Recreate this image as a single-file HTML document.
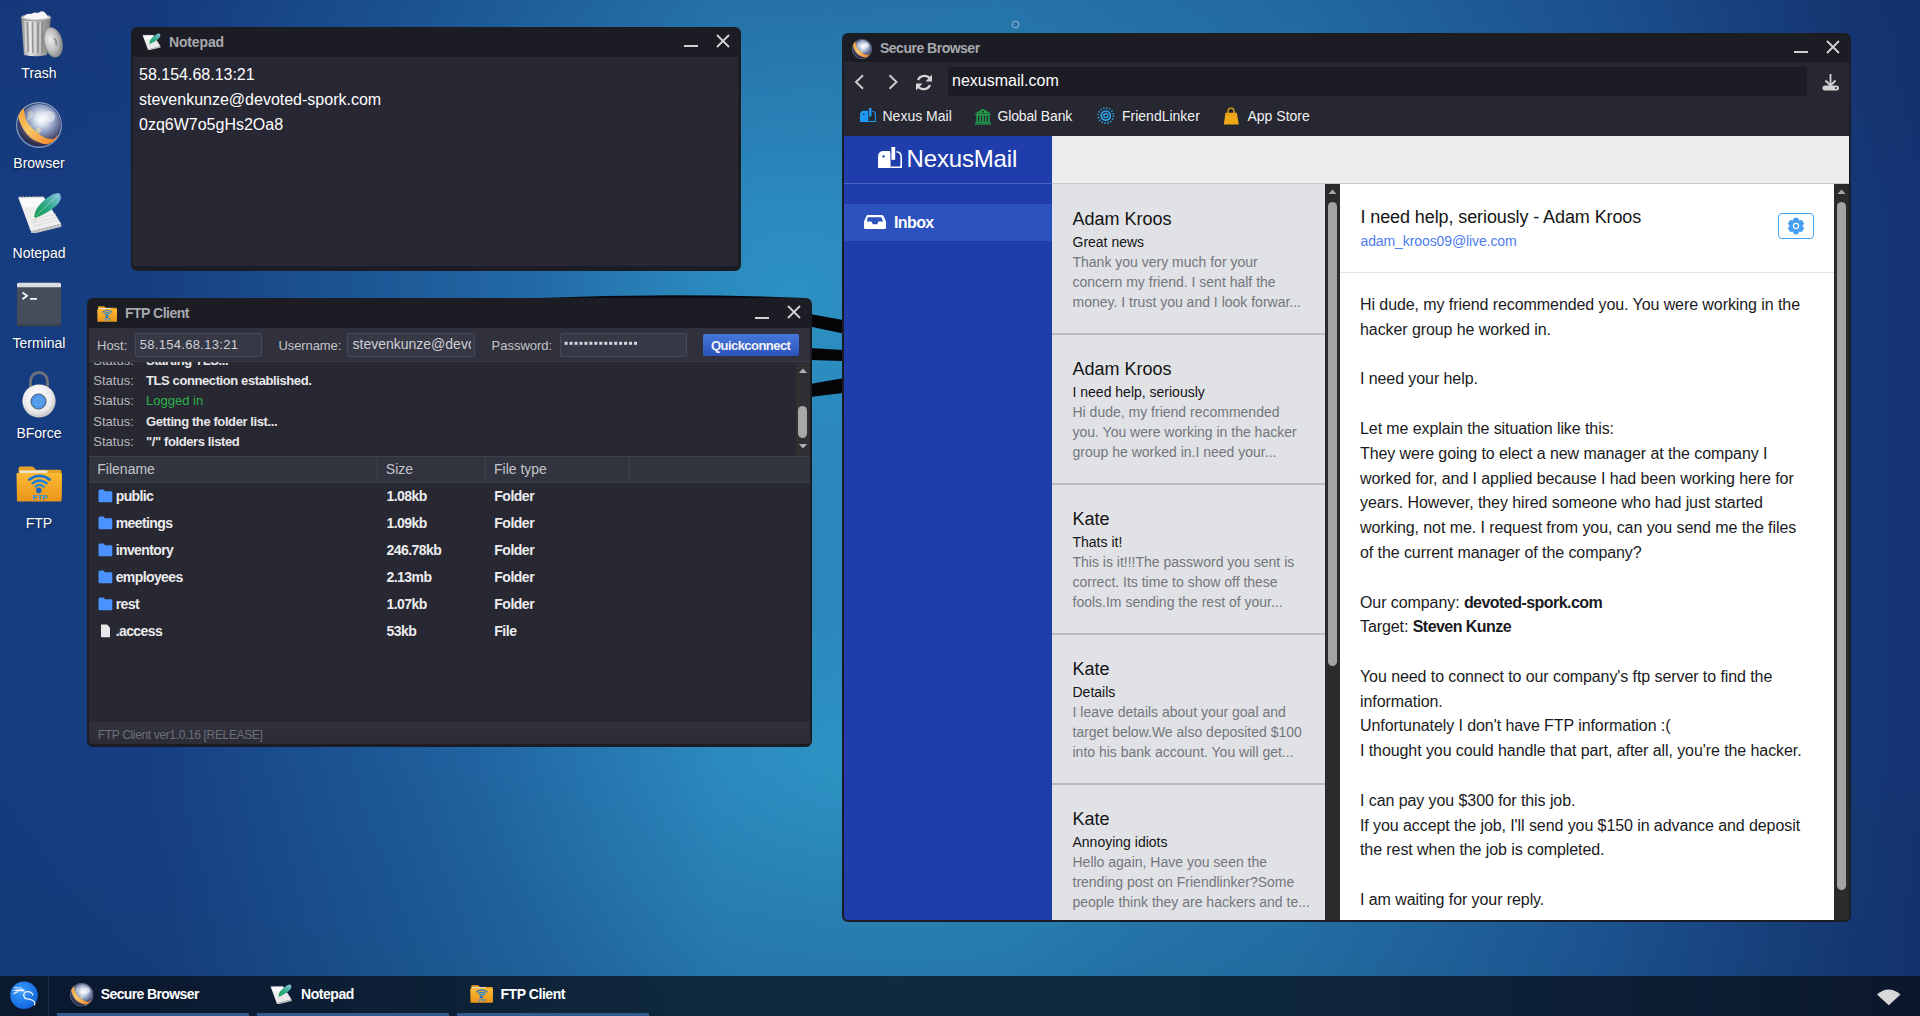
<!DOCTYPE html>
<html><head><meta charset="utf-8">
<style>
*{box-sizing:border-box;margin:0;padding:0}
html,body{width:1920px;height:1016px;overflow:hidden}
body{position:relative;font-family:"Liberation Sans",sans-serif;background:#163c80}
.t{position:absolute;line-height:1;white-space:pre}
.t b{letter-spacing:-0.55px}
.r{position:absolute}
svg{position:absolute;overflow:visible}
</style></head><body>
<svg width="0" height="0" style="position:absolute;left:0;top:0">
<defs>
 <radialGradient id="gGlobe" cx="0.55" cy="0.36" r="0.66">
  <stop offset="0" stop-color="#ffffff"/>
  <stop offset="0.22" stop-color="#dce4f0"/>
  <stop offset="0.5" stop-color="#8b9bc0"/>
  <stop offset="0.8" stop-color="#4a4a70"/>
  <stop offset="1" stop-color="#2a1c30"/>
 </radialGradient>
 <linearGradient id="gBand" x1="0" y1="0" x2="1" y2="1">
  <stop offset="0" stop-color="#f09a30"/>
  <stop offset="0.45" stop-color="#f8c868"/>
  <stop offset="1" stop-color="#f07c20"/>
 </linearGradient>
 <linearGradient id="gFeather" x1="0" y1="1" x2="1" y2="0">
  <stop offset="0" stop-color="#0f9a48"/>
  <stop offset="0.45" stop-color="#2aa882"/>
  <stop offset="1" stop-color="#8cc4e8"/>
 </linearGradient>
 <linearGradient id="gFolder" x1="0" y1="0" x2="0" y2="1">
  <stop offset="0" stop-color="#fdbb34"/>
  <stop offset="1" stop-color="#e8941a"/>
 </linearGradient>
 <linearGradient id="gSilver" x1="0" y1="0" x2="1" y2="0">
  <stop offset="0" stop-color="#8a8a8a"/>
  <stop offset="0.3" stop-color="#e6e6e6"/>
  <stop offset="0.55" stop-color="#bcbcbc"/>
  <stop offset="1" stop-color="#7c7c7c"/>
 </linearGradient>
 <radialGradient id="gLid" cx="0.35" cy="0.4" r="0.7">
  <stop offset="0" stop-color="#f0f0f0"/>
  <stop offset="0.6" stop-color="#b8b8b8"/>
  <stop offset="1" stop-color="#7a7a7a"/>
 </radialGradient>
 <radialGradient id="gLock" cx="0.45" cy="0.4" r="0.6">
  <stop offset="0" stop-color="#ffffff"/>
  <stop offset="0.7" stop-color="#ececec"/>
  <stop offset="1" stop-color="#c4c4c4"/>
 </radialGradient>
 <radialGradient id="gKali" cx="0.4" cy="0.35" r="0.7">
  <stop offset="0" stop-color="#3aa0ff"/>
  <stop offset="1" stop-color="#1060d8"/>
 </radialGradient>
 <linearGradient id="gQC" x1="0" y1="0" x2="0" y2="1">
  <stop offset="0" stop-color="#4a7ee0"/>
  <stop offset="1" stop-color="#2a52b8"/>
 </linearGradient>

 <symbol id="sGlobe" viewBox="0 0 46 46">
  <circle cx="23" cy="23" r="22.4" fill="#3a4a78" fill-opacity="0.5" stroke="#b4c4dc" stroke-opacity="0.75" stroke-width="1.1"/>
  <circle cx="23.5" cy="22.8" r="20.8" fill="url(#gGlobe)"/>
  <ellipse cx="33" cy="14.5" rx="6.2" ry="5.4" fill="#f4f4f4" opacity="0.55"/>
  <path d="M12,10 C15,8 18,9 17,13 C16,17 13,19 11,18 Z" fill="#f0ecd0" opacity="0.4"/>
  <ellipse cx="22.5" cy="28.5" rx="2.4" ry="2.8" fill="#f0e8b0" opacity="0.55"/>
  <path d="M10.3,4.2 C6,7 3,11 2.4,14.2 C2.5,17 3.2,19 4.4,21.1 C5.5,24 6.8,26.5 8.3,28.5 C10,31 12,33.5 14.2,35.4 C16.5,37.3 19,38.8 21.6,39.8 C24,41 27,42 29.5,42.3 C31.5,42.5 33.5,41.8 35.4,40.8 C38,39.3 40.3,36.5 41.8,33.4 L41.3,32.9 C40,34.8 38.8,36.2 37.4,36.9 C34.8,37.2 32,36.8 29.5,35.9 C26.5,34.5 23.5,32.5 21.1,30.5 C18.5,28.5 16,26.3 14.2,24.1 C12,21.5 10.5,19 9.8,16.7 C8.8,13.5 8.2,10 7.8,7.35 C8.5,6 9.3,5 10.3,4.2 Z" fill="url(#gBand)"/>
 </symbol>

 <symbol id="sNote" viewBox="0 0 45 41">
  <polygon points="13.9,39.5 44.1,31.8 44.4,34.8 14.2,42.3" fill="#c4c4c4"/>
  <polygon points="1.1,5.2 26.7,4.7 44.1,31.8 13.9,39.5" fill="#eeeeee"/>
  <polygon points="2.5,6.5 25.5,6 31,14 7,15.5" fill="#fafafa"/>
  <path d="M2.5,4.6 h23" stroke="#8a8a8a" stroke-width="1.4" stroke-dasharray="1.5 1.6"/>
  <path d="M17,34 L42,28 M15.5,31 L40.5,25 M14,28 L39,22" stroke="#d6d6d6" stroke-width="0.7"/>
  <path d="M17.5,30.5 L21,22" stroke="#b8c8c0" stroke-width="0.8"/>
  <path d="M17.5,25.5 C17,19 22,12 30,6 C34,3 38,0.8 42,1.3 C45.2,4 44,9 40,13 C36,17 30,20.5 24,23.5 C21,25 19,25.5 17.5,25.5 Z" fill="url(#gFeather)"/>
  <path d="M19,24 C25,18 33,10 41,3.5" stroke="#cfe8e0" stroke-width="0.6" fill="none" opacity="0.8"/>
 </symbol>

 <symbol id="sFolder" viewBox="0 0 47 36">
  <path d="M2.5,2.5 Q2.5,0.5 4.5,0.5 H16 Q17.5,0.5 18.5,2 L19.8,3.8 H44 Q45.5,3.8 45.5,5.5 V33 H2.5 Z" fill="#e4a322"/>
  <rect x="3.5" y="4.5" width="28" height="2.4" fill="#e8e8e0"/>
  <path d="M0.5,8 Q0.5,7 1.5,7 H44.5 Q46,7 46,8.5 L45.5,34.5 Q45.5,35.5 44.5,35.5 H2 Q1,35.5 1,34.5 Z" fill="url(#gFolder)"/>
  <path d="M13.2,13.6 Q23.5,6.2 33.8,13.6" stroke="#1a74d0" stroke-width="2.6" fill="none" stroke-linecap="round"/>
  <path d="M16.6,17.2 Q23.6,12.1 30.6,17.2" stroke="#1c80d8" stroke-width="2.5" fill="none" stroke-linecap="round"/>
  <path d="M19.6,20.6 Q23.6,17.1 27.6,20.6" stroke="#1e88e0" stroke-width="2.3" fill="none" stroke-linecap="round"/>
  <circle cx="22.8" cy="24.4" r="2.8" fill="#1766c8"/>
  <text x="24" y="33.6" font-family="Liberation Sans" font-weight="700" font-size="8" fill="#2a90dc" text-anchor="middle">FTP</text>
 </symbol>

 <symbol id="sMailbox" viewBox="0 0 24 21">
  <path d="M0,21 V9.8 Q0,4 5.8,4 H12.6 V21 Z" fill="currentColor"/>
  <path d="M12.6,20.2 H23.2 V10.2 Q23.2,4.8 18,4.8" stroke="currentColor" stroke-width="1.6" fill="none"/>
  <path d="M11.6,3 L18.4,3 L18.4,7.6 L17.8,13.8 L12.6,13.8 L12.6,7 Z" fill="var(--bg)"/>
  <rect x="13.4" y="0" width="3.8" height="12.8" fill="currentColor"/>
  <circle cx="5.6" cy="9.4" r="1.2" fill="var(--bg)"/>
 </symbol>
</defs></svg>

<div class="r" style="left:0;top:0;width:1920px;height:1016px;background:linear-gradient(90deg,#163c80 0px,#173e82 150px,#1d5a98 400px,#2a80b8 720px,#2a83b9 1000px,#2676ae 1300px,#1e5898 1600px,#163876 1850px,#143372 1920px)"></div>
<div class="r" style="left:0;top:0;width:1920px;height:1016px;background:radial-gradient(ellipse 380px 300px at 850px 760px,rgba(48,180,215,0.36) 0%,rgba(48,170,210,0.14) 50%,rgba(48,170,210,0) 100%),radial-gradient(ellipse 260px 300px at 790px 300px,rgba(48,180,215,0.32) 0%,rgba(48,175,210,0.12) 55%,rgba(48,170,210,0) 100%),linear-gradient(180deg,rgba(12,36,86,0.16) 0px,rgba(12,36,86,0) 220px,rgba(10,48,80,0) 760px,rgba(10,48,80,0.16) 976px)"></div>
<svg style="left:0;top:0" width="1920" height="1016"><path d="M540,299.5 Q670,294 805,299.5" stroke="#0a0b10" stroke-width="3" fill="none"/><polygon points="810,314 843,320 843,333.5 810,326.5" fill="#050508"/><polygon points="810,348 843,350 843,361 810,360" fill="#050508"/><polygon points="810,384 843,378.3 843,393 810,397" fill="#050508"/><circle cx="1015.5" cy="24.5" r="3.2" stroke="#8fb4d0" stroke-width="1.2" fill="none" opacity="0.8"/></svg>
<svg style="left:0;top:0" width="80" height="60"><path d="M21.2,17.5 L50.8,17.5 L47,55 Q35.5,57.5 24,55 Z" fill="url(#gSilver)"/><path d="M27.5,22 L28.3,52 M32.4,22 L32.8,53 M38,22 L38,53 M42.5,22 L42,53" stroke="#7e7e7e" stroke-width="1.5" opacity="0.75"/><path d="M25,21 L26,52 M30,21 L30.5,53 M35.2,21 L35.3,53 M40.2,21 L40,53" stroke="#f4f4f4" stroke-width="1" opacity="0.6"/><ellipse cx="36" cy="17.5" rx="14.8" ry="3.4" fill="#cfcfcf" stroke="#8c8c8c" stroke-width="0.9"/><path d="M24,17.5 Q26,13 31,14 Q34,11.5 38,13 Q41,10.5 44,11.8 Q47,14 48,17.5 Q36,21 24,17.5Z" fill="#f6f6f6"/><ellipse cx="52.8" cy="42.4" rx="9.4" ry="15.3" transform="rotate(-14 52.8 42.4)" fill="#8a8a8a"/><ellipse cx="53.6" cy="42.2" rx="8.8" ry="14.8" transform="rotate(-14 53.6 42.2)" fill="url(#gLid)"/><path d="M54,38.5 Q57,40 56,45" stroke="#7a7a7a" stroke-width="1.6" fill="none" opacity="0.8"/></svg>
<svg style="left:16px;top:102px" width="46" height="46"><use href="#sGlobe"/></svg>
<svg style="left:17px;top:192px" width="45" height="41"><use href="#sNote"/></svg>
<svg style="left:0;top:270px" width="80" height="60"><rect x="17" y="12.8" width="44" height="43.4" rx="1.5" fill="#454d5a"/><path d="M17,17.3 V14.3 Q17,12.8 18.5,12.8 H59.5 Q61,12.8 61,14.3 V17.3 Z" fill="#dcdde2"/><rect x="17" y="54" width="44" height="2.2" fill="#3a414c"/><path d="M22.5,22.5 L27,25.8 L22.5,29.2" stroke="#f4f4f4" stroke-width="1.8" fill="none"/><rect x="30" y="28" width="7" height="1.8" fill="#f0f0f0"/></svg>
<svg style="left:0;top:360px" width="80" height="60"><path d="M30.5,27 V21 A8.5,8.5 0 0 1 47.5,21 V27" stroke="#6e7278" stroke-width="2.8" fill="none"/><circle cx="39" cy="41" r="16.6" fill="url(#gLock)"/><circle cx="38.5" cy="41.5" r="7.6" fill="#4e96e8" stroke="#4c5a70" stroke-width="1"/><circle cx="38.5" cy="41.5" r="3.5" fill="none" stroke="#8cc0f4" stroke-width="0.8" opacity="0.7"/></svg>
<svg style="left:16px;top:466px" width="47" height="36"><use href="#sFolder"/></svg>
<div class="t" style="left:0;width:78px;text-align:center;top:66.15px;font-size:14px;color:#fff;text-shadow:0 1px 2px rgba(0,0,0,.5)">Trash</div>
<div class="t" style="left:0;width:78px;text-align:center;top:156.15px;font-size:14px;color:#fff;text-shadow:0 1px 2px rgba(0,0,0,.5)">Browser</div>
<div class="t" style="left:0;width:78px;text-align:center;top:246.15px;font-size:14px;color:#fff;text-shadow:0 1px 2px rgba(0,0,0,.5)">Notepad</div>
<div class="t" style="left:0;width:78px;text-align:center;top:336.15px;font-size:14px;color:#fff;text-shadow:0 1px 2px rgba(0,0,0,.5)">Terminal</div>
<div class="t" style="left:0;width:78px;text-align:center;top:426.15px;font-size:14px;color:#fff;text-shadow:0 1px 2px rgba(0,0,0,.5)">BForce</div>
<div class="t" style="left:0;width:78px;text-align:center;top:516.15px;font-size:14px;color:#fff;text-shadow:0 1px 2px rgba(0,0,0,.5)">FTP</div>
<div class="r" style="left:131px;top:27px;width:610px;height:244px;background:#1b1c24;border-radius:6px"></div>
<div class="r" style="left:133px;top:57px;width:605px;height:209px;background:#282834;border-radius:0 0 3px 3px"></div>
<svg style="left:142px;top:33px" width="19" height="17"><use href="#sNote"/></svg>
<div class="t" style="left:169px;top:35.15px;font-size:14px;color:#a8a9ae;font-weight:700;letter-spacing:-0.15px;">Notepad</div>
<div class="r" style="left:684px;top:45px;width:14px;height:2px;background:#d0d0d0;"></div>
<svg style="left:714.5px;top:33px" width="16" height="16"><path d="M2,2 L14,14 M14,2 L2,14" stroke="#d4d4d4" stroke-width="1.8"/></svg>
<div class="t" style="left:139px;top:67.06px;font-size:16px;color:#ffffff;">58.154.68.13:21</div>
<div class="t" style="left:139px;top:92.06px;font-size:16px;color:#ffffff;">stevenkunze@devoted-spork.com</div>
<div class="t" style="left:139px;top:117.06px;font-size:16px;color:#ffffff;">0zq6W7o5gHs2Oa8</div>
<div class="r" style="left:842px;top:33px;width:1009px;height:889px;background:#1b1c24;border-radius:6px"></div>
<div class="r" style="left:844px;top:62px;width:1005px;height:74px;background:#272732;"></div>
<svg style="left:852px;top:38.5px" width="20" height="20"><use href="#sGlobe"/></svg>
<div class="t" style="left:880px;top:41.15px;font-size:14px;color:#a8a9ae;font-weight:700;letter-spacing:-0.5px;">Secure Browser</div>
<div class="r" style="left:1794px;top:51px;width:14px;height:2px;background:#d0d0d0;"></div>
<svg style="left:1825px;top:39px" width="16" height="16"><path d="M2,2 L14,14 M14,2 L2,14" stroke="#d4d4d4" stroke-width="1.8"/></svg>
<svg style="left:850px;top:70px" width="90" height="24"><path d="M13,5.3 L6,12 L13,18.7" stroke="#cfcfcf" stroke-width="1.9" fill="none"/><path d="M39.5,5.3 L46.5,12 L39.5,18.7" stroke="#cfcfcf" stroke-width="1.9" fill="none"/><path d="M80.5,9.5 A7,7 0 0 0 68,10" stroke="#d4d4d4" stroke-width="2.4" fill="none"/><path d="M67.5,15.5 A7,7 0 0 0 80,15" stroke="#d4d4d4" stroke-width="2.4" fill="none"/><path d="M82,4.5 L82,11.5 L75.5,11.5 Z" fill="#d4d4d4"/><path d="M66,20.5 L66,13.5 L72.5,13.5 Z" fill="#d4d4d4"/></svg>
<div class="r" style="left:948px;top:67px;width:859px;height:29px;background:#1c1c24;"></div>
<div class="t" style="left:952px;top:73.26px;font-size:16px;color:#ffffff;">nexusmail.com</div>
<svg style="left:1820px;top:72px" width="22" height="22"><path d="M10.5,2 V13" stroke="#d4d4d4" stroke-width="1.8"/><path d="M5.5,8.5 L10.5,13.5 L15.5,8.5" stroke="#d4d4d4" stroke-width="1.8" fill="none"/><rect x="2.5" y="13.5" width="16.5" height="5" rx="2.5" fill="#d4d4d4"/><circle cx="16" cy="16" r="1" fill="#272732"/></svg>
<svg style="left:860px;top:108px;color:#1e9af0;--bg:#272732" width="16" height="14"><use href="#sMailbox"/></svg>
<div class="t" style="left:882.5px;top:109.15px;font-size:14px;color:#f0f0f0;">Nexus Mail</div>
<svg style="left:974px;top:107.5px" width="18" height="17"><path d="M1,5.5 L9,0.8 L17,5.5 Z" fill="#22a04e"/><circle cx="9" cy="3.8" r="1" fill="#272732"/><rect x="1.5" y="6" width="15" height="1.6" fill="#22a04e"/><path d="M3.2,7.5 V13.5 M6.2,7.5 V13.5 M9,7.5 V13.5 M11.8,7.5 V13.5 M14.8,7.5 V13.5" stroke="#22a04e" stroke-width="1.6"/><rect x="1.5" y="13.5" width="15" height="1.4" fill="#22a04e"/><rect x="0.8" y="15.4" width="16.4" height="1.2" fill="#22a04e"/></svg>
<div class="t" style="left:997.5px;top:109.15px;font-size:14px;color:#f0f0f0;letter-spacing:-0.15px;">Global Bank</div>
<svg style="left:1097px;top:107px" width="18" height="18"><circle cx="8.8" cy="8.6" r="7.6" stroke="#2ea8f0" stroke-width="1.7" fill="none" stroke-dasharray="1.3 1.7"/><circle cx="8.8" cy="8.6" r="4.6" stroke="#2ea8f0" stroke-width="1.6" fill="none"/><circle cx="8.8" cy="8.6" r="2.1" stroke="#2ea8f0" stroke-width="1.3" fill="none"/></svg>
<div class="t" style="left:1122px;top:109.15px;font-size:14px;color:#f0f0f0;">FriendLinker</div>
<svg style="left:1223px;top:106.5px" width="17" height="18"><path d="M5,6 V4.5 Q5,1.2 8,1.2 Q11,1.2 11,4.5 V6" stroke="#f0a818" stroke-width="1.3" fill="none"/><path d="M2.5,5.8 H13.8 L15.8,17.5 H0.8 Z" fill="#f0a818"/><circle cx="5" cy="8" r="0.8" fill="#c07a08"/><circle cx="11.2" cy="8" r="0.8" fill="#c07a08"/></svg>
<div class="t" style="left:1247.5px;top:109.15px;font-size:14px;color:#f0f0f0;">App Store</div>
<div class="r" style="left:844px;top:136px;width:208px;height:784px;background:#1f3dab;border-radius:0 0 0 4px"></div>
<div class="r" style="left:844px;top:183px;width:208px;height:1px;background:#4a63c0;"></div>
<div class="r" style="left:844px;top:204px;width:208px;height:37px;background:#2c52bf;"></div>
<svg style="left:878px;top:147px;color:#fff;--bg:#1f3dab" width="24" height="21"><use href="#sMailbox"/></svg>
<div class="t" style="left:906.5px;top:146.68px;font-size:24px;color:#ffffff;letter-spacing:-0.15px;">NexusMail</div>
<svg style="left:863px;top:214px" width="24" height="16"><path d="M4.5,1 H18.5 Q20,1 20.8,2.4 L23,7.5 V13.5 Q23,15 21.5,15 H2.5 Q1,15 1,13.5 V7.5 L3.2,2.4 Q4,1 4.5,1 Z" fill="#fff"/><path d="M4.8,3.2 H18.2 L20.2,7.6 H15.6 L14.2,10.2 H9.8 L8.4,7.6 H3.8 Z" fill="#2c52bf"/></svg>
<div class="t" style="left:894px;top:214.56px;font-size:16px;color:#ffffff;font-weight:700;letter-spacing:-0.6px;">Inbox</div>
<div class="r" style="left:1052px;top:136px;width:797px;height:48px;background:#ebecee;"></div>
<div class="r" style="left:1052px;top:183px;width:797px;height:1px;background:#c8cacd;"></div>
<div class="r" style="left:1052px;top:184px;width:274px;height:736px;background:#e0e2e6;"></div>
<div class="r" style="left:1325px;top:184px;width:15px;height:736px;background:#2b2b2b;"></div>
<svg style="left:1325px;top:184px" width="15" height="20"><path d="M3.5,10 L7.5,5.5 L11.5,10 Z" fill="#a8a8a8"/></svg>
<div class="r" style="left:1327.8px;top:202px;width:9.4px;height:464px;background:#a3a3a3;border-radius:5px"></div>
<div class="r" style="left:1340px;top:184px;width:494px;height:736px;background:#ffffff;"></div>
<div class="r" style="left:1834px;top:184px;width:15px;height:736px;background:#2b2b2b;border-radius:0 0 3px 0"></div>
<svg style="left:1834px;top:184px" width="15" height="20"><path d="M3.5,10 L7.5,5.5 L11.5,10 Z" fill="#a8a8a8"/></svg>
<div class="r" style="left:1836.8px;top:202px;width:9.6px;height:688px;background:#a3a3a3;border-radius:5px"></div>
<div class="t" style="left:1072.5px;top:209.76px;font-size:18px;color:#141414;">Adam Kroos</div>
<div class="t" style="left:1072.5px;top:234.65px;font-size:14px;color:#141414;">Great news</div>
<div class="t" style="left:1072.5px;top:254.65px;font-size:14px;color:#74767c;">Thank you very much for your</div>
<div class="t" style="left:1072.5px;top:274.65px;font-size:14px;color:#74767c;">concern my friend. I sent half the</div>
<div class="t" style="left:1072.5px;top:294.65px;font-size:14px;color:#74767c;">money. I trust you and I look forwar...</div>
<div class="r" style="left:1052px;top:333px;width:273px;height:2px;background:#babcc1;"></div>
<div class="t" style="left:1072.5px;top:359.76px;font-size:18px;color:#141414;">Adam Kroos</div>
<div class="t" style="left:1072.5px;top:384.65px;font-size:14px;color:#141414;">I need help, seriously</div>
<div class="t" style="left:1072.5px;top:404.65px;font-size:14px;color:#74767c;">Hi dude, my friend recommended</div>
<div class="t" style="left:1072.5px;top:424.65px;font-size:14px;color:#74767c;">you. You were working in the hacker</div>
<div class="t" style="left:1072.5px;top:444.65px;font-size:14px;color:#74767c;">group he worked in.I need your...</div>
<div class="r" style="left:1052px;top:483px;width:273px;height:2px;background:#babcc1;"></div>
<div class="t" style="left:1072.5px;top:509.76px;font-size:18px;color:#141414;">Kate</div>
<div class="t" style="left:1072.5px;top:534.65px;font-size:14px;color:#141414;">Thats it!</div>
<div class="t" style="left:1072.5px;top:554.65px;font-size:14px;color:#74767c;">This is it!!!The password you sent is</div>
<div class="t" style="left:1072.5px;top:574.65px;font-size:14px;color:#74767c;">correct. Its time to show off these</div>
<div class="t" style="left:1072.5px;top:594.65px;font-size:14px;color:#74767c;">fools.Im sending the rest of your...</div>
<div class="r" style="left:1052px;top:633px;width:273px;height:2px;background:#babcc1;"></div>
<div class="t" style="left:1072.5px;top:659.76px;font-size:18px;color:#141414;">Kate</div>
<div class="t" style="left:1072.5px;top:684.65px;font-size:14px;color:#141414;">Details</div>
<div class="t" style="left:1072.5px;top:704.65px;font-size:14px;color:#74767c;">I leave details about your goal and</div>
<div class="t" style="left:1072.5px;top:724.65px;font-size:14px;color:#74767c;">target below.We also deposited $100</div>
<div class="t" style="left:1072.5px;top:744.65px;font-size:14px;color:#74767c;">into his bank account. You will get...</div>
<div class="r" style="left:1052px;top:783px;width:273px;height:2px;background:#babcc1;"></div>
<div class="t" style="left:1072.5px;top:809.76px;font-size:18px;color:#141414;">Kate</div>
<div class="t" style="left:1072.5px;top:834.65px;font-size:14px;color:#141414;">Annoying idiots</div>
<div class="t" style="left:1072.5px;top:854.65px;font-size:14px;color:#74767c;">Hello again, Have you seen the</div>
<div class="t" style="left:1072.5px;top:874.65px;font-size:14px;color:#74767c;">trending post on Friendlinker?Some</div>
<div class="t" style="left:1072.5px;top:894.65px;font-size:14px;color:#74767c;">people think they are hackers and te...</div>
<div class="t" style="left:1360.5px;top:208.06px;font-size:18px;color:#141414;letter-spacing:-0.1px;">I need help, seriously - Adam Kroos</div>
<div class="t" style="left:1360.5px;top:233.65px;font-size:14px;color:#4d7cf0;letter-spacing:-0.1px;">adam_kroos09@live.com</div>
<div class="r" style="left:1778px;top:213px;width:36px;height:26px;border:1px solid #4aa3f0;border-radius:4px"></div>
<svg style="left:1787px;top:216.8px" width="18" height="18"><polygon points="11.70,3.20 10.82,1.11 7.18,1.11 6.30,3.20 5.33,3.76 3.08,3.48 1.25,6.63 2.62,8.44 2.62,9.56 1.25,11.37 3.08,14.52 5.33,14.24 6.30,14.80 7.18,16.89 10.82,16.89 11.70,14.80 12.67,14.24 14.92,14.52 16.75,11.37 15.38,9.56 15.38,8.44 16.75,6.63 14.92,3.48 12.67,3.76" fill="#45a0f2" stroke="#45a0f2" stroke-width="0.8" stroke-linejoin="round"/><circle cx="9" cy="9" r="2.6" fill="none" stroke="#fff" stroke-width="1.1"/></svg>
<div class="r" style="left:1340px;top:272px;width:494px;height:1px;background:#e2e3e6;"></div>
<div class="t" style="left:1360px;top:297.06px;font-size:16px;color:#1a1a22;letter-spacing:-0.08px;">Hi dude, my friend recommended you. You were working in the</div>
<div class="t" style="left:1360px;top:321.85px;font-size:16px;color:#1a1a22;letter-spacing:-0.08px;">hacker group he worked in.</div>
<div class="t" style="left:1360px;top:371.43px;font-size:16px;color:#1a1a22;letter-spacing:-0.08px;">I need your help.</div>
<div class="t" style="left:1360px;top:421.01px;font-size:16px;color:#1a1a22;letter-spacing:-0.08px;">Let me explain the situation like this:</div>
<div class="t" style="left:1360px;top:445.80px;font-size:16px;color:#1a1a22;letter-spacing:-0.08px;">They were going to elect a new manager at the company I</div>
<div class="t" style="left:1360px;top:470.59px;font-size:16px;color:#1a1a22;letter-spacing:-0.08px;">worked for, and I applied because I had been working here for</div>
<div class="t" style="left:1360px;top:495.38px;font-size:16px;color:#1a1a22;letter-spacing:-0.08px;">years. However, they hired someone who had just started</div>
<div class="t" style="left:1360px;top:520.17px;font-size:16px;color:#1a1a22;letter-spacing:-0.08px;">working, not me. I request from you, can you send me the files</div>
<div class="t" style="left:1360px;top:544.96px;font-size:16px;color:#1a1a22;letter-spacing:-0.08px;">of the current manager of the company?</div>
<div class="t" style="left:1360px;top:594.54px;font-size:16px;color:#1a1a22;letter-spacing:-0.08px;">Our company: <b>devoted-spork.com</b></div>
<div class="t" style="left:1360px;top:619.33px;font-size:16px;color:#1a1a22;letter-spacing:-0.08px;">Target: <b>Steven Kunze</b></div>
<div class="t" style="left:1360px;top:668.91px;font-size:16px;color:#1a1a22;letter-spacing:-0.08px;">You need to connect to our company's ftp server to find the</div>
<div class="t" style="left:1360px;top:693.70px;font-size:16px;color:#1a1a22;letter-spacing:-0.08px;">information.</div>
<div class="t" style="left:1360px;top:718.49px;font-size:16px;color:#1a1a22;letter-spacing:-0.08px;">Unfortunately I don't have FTP information :(</div>
<div class="t" style="left:1360px;top:743.28px;font-size:16px;color:#1a1a22;letter-spacing:-0.08px;">I thought you could handle that part, after all, you're the hacker.</div>
<div class="t" style="left:1360px;top:792.86px;font-size:16px;color:#1a1a22;letter-spacing:-0.08px;">I can pay you $300 for this job.</div>
<div class="t" style="left:1360px;top:817.65px;font-size:16px;color:#1a1a22;letter-spacing:-0.08px;">If you accept the job, I'll send you $150 in advance and deposit</div>
<div class="t" style="left:1360px;top:842.44px;font-size:16px;color:#1a1a22;letter-spacing:-0.08px;">the rest when the job is completed.</div>
<div class="t" style="left:1360px;top:892.02px;font-size:16px;color:#1a1a22;letter-spacing:-0.08px;">I am waiting for your reply.</div>
<div class="r" style="left:87px;top:298px;width:725px;height:449px;background:#1b1c24;border-radius:6px"></div>
<div class="r" style="left:89px;top:328px;width:721px;height:33px;background:#30313d;"></div>
<div class="r" style="left:89px;top:361px;width:721px;height:1px;background:#3a3b48;"></div>
<div class="r" style="left:89px;top:362px;width:721px;height:360px;background:#282833;"></div>
<svg style="left:97px;top:305.5px" width="20.5" height="16"><use href="#sFolder"/></svg>
<div class="t" style="left:125px;top:306.45px;font-size:14px;color:#a8a9ae;font-weight:700;letter-spacing:-0.5px;">FTP Client</div>
<div class="r" style="left:755px;top:317px;width:14px;height:2px;background:#d0d0d0;"></div>
<svg style="left:786px;top:304px" width="16" height="16"><path d="M2,2 L14,14 M14,2 L2,14" stroke="#d4d4d4" stroke-width="1.8"/></svg>
<div class="t" style="left:97px;top:338.80px;font-size:13px;color:#c4c4c8;">Host:</div>
<div class="r" style="left:134.5px;top:333px;width:127.5px;height:23.5px;background:#363846;border:1px solid #464958;border-radius:2px"></div>
<div class="t" style="left:139.8px;top:337.70px;font-size:13px;color:#d0d0d4;letter-spacing:0.3px;">58.154.68.13:21</div>
<div class="t" style="left:278.5px;top:338.80px;font-size:13px;color:#c4c4c8;letter-spacing:-0.1px;">Username:</div>
<div class="r" style="left:347.3px;top:333px;width:127.5px;height:23.5px;background:#363846;border:1px solid #464958;border-radius:2px"></div>
<div class="r" style="left:352.5px;top:336px;width:118px;height:18px;overflow:hidden">
<div class="t" style="left:0px;top:0.85px;font-size:14px;color:#d0d0d4;">stevenkunze@devoted-spork.com</div>
</div>
<div class="t" style="left:491.5px;top:338.80px;font-size:13px;color:#c4c4c8;">Password:</div>
<div class="r" style="left:559.7px;top:333px;width:127.5px;height:23.5px;background:#363846;border:1px solid #464958;border-radius:2px"></div>
<svg style="left:560px;top:338px" width="80" height="12"><rect x="4.60" y="3.8" width="3" height="3" fill="#d8d8dc"/><rect x="9.56" y="3.8" width="3" height="3" fill="#d8d8dc"/><rect x="14.52" y="3.8" width="3" height="3" fill="#d8d8dc"/><rect x="19.48" y="3.8" width="3" height="3" fill="#d8d8dc"/><rect x="24.44" y="3.8" width="3" height="3" fill="#d8d8dc"/><rect x="29.40" y="3.8" width="3" height="3" fill="#d8d8dc"/><rect x="34.36" y="3.8" width="3" height="3" fill="#d8d8dc"/><rect x="39.32" y="3.8" width="3" height="3" fill="#d8d8dc"/><rect x="44.28" y="3.8" width="3" height="3" fill="#d8d8dc"/><rect x="49.24" y="3.8" width="3" height="3" fill="#d8d8dc"/><rect x="54.20" y="3.8" width="3" height="3" fill="#d8d8dc"/><rect x="59.16" y="3.8" width="3" height="3" fill="#d8d8dc"/><rect x="64.12" y="3.8" width="3" height="3" fill="#d8d8dc"/><rect x="69.08" y="3.8" width="3" height="3" fill="#d8d8dc"/><rect x="74.04" y="3.8" width="3" height="3" fill="#d8d8dc"/></svg>
<div class="r" style="left:703px;top:334px;width:96px;height:22px;background:linear-gradient(#4677da,#2b53b9);border-radius:2px"></div>
<div class="t" style="left:711px;top:339.00px;font-size:13px;color:#f4f4f8;font-weight:700;letter-spacing:-0.55px;">Quickconnect</div>
<div class="r" style="left:89px;top:362px;width:706px;height:94px;overflow:hidden">
<div class="t" style="left:4.299999999999997px;top:-8.40px;font-size:13px;color:#b8b8bc;">Status:</div>
<div class="t" style="left:57px;top:-8.40px;font-size:13px;color:#e8e8ea;font-weight:700;letter-spacing:-0.4px;">Starting TLS...</div>
<div class="t" style="left:4.299999999999997px;top:11.95px;font-size:13px;color:#b8b8bc;">Status:</div>
<div class="t" style="left:57px;top:11.95px;font-size:13px;color:#e8e8ea;font-weight:700;letter-spacing:-0.4px;">TLS connection established.</div>
<div class="t" style="left:4.299999999999997px;top:32.30px;font-size:13px;color:#b8b8bc;">Status:</div>
<div class="t" style="left:57px;top:32.30px;font-size:13px;color:#2cb24a;letter-spacing:0px;">Logged in</div>
<div class="t" style="left:4.299999999999997px;top:52.65px;font-size:13px;color:#b8b8bc;">Status:</div>
<div class="t" style="left:57px;top:52.65px;font-size:13px;color:#e8e8ea;font-weight:700;letter-spacing:-0.4px;">Getting the folder list...</div>
<div class="t" style="left:4.299999999999997px;top:73.00px;font-size:13px;color:#b8b8bc;">Status:</div>
<div class="t" style="left:57px;top:73.00px;font-size:13px;color:#e8e8ea;font-weight:700;letter-spacing:-0.4px;">"/" folders listed</div>
</div>
<div class="r" style="left:795.5px;top:362px;width:14px;height:94px;background:#2f2f34;"></div>
<svg style="left:795.5px;top:362px" width="14" height="94"><path d="M2.8,11 L7,6.4 L11.2,11 Z" fill="#b0b0b0"/><path d="M2.8,82 L7,86.6 L11.2,82 Z" fill="#b0b0b0"/></svg>
<div class="r" style="left:798px;top:405.7px;width:9px;height:32.5px;background:#a8a8a8;border-radius:4.5px"></div>
<div class="r" style="left:89px;top:456px;width:721px;height:27px;background:#31333f;border-top:1px solid #3e404c;border-bottom:1px solid #3a3c48"></div>
<div class="r" style="left:377px;top:457px;width:1px;height:25px;background:#3e404c;"></div>
<div class="r" style="left:485px;top:457px;width:1px;height:25px;background:#3e404c;"></div>
<div class="r" style="left:629px;top:457px;width:1px;height:25px;background:#3e404c;"></div>
<div class="t" style="left:97.3px;top:461.95px;font-size:14px;color:#c4c4c8;">Filename</div>
<div class="t" style="left:385.8px;top:461.95px;font-size:14px;color:#c4c4c8;">Size</div>
<div class="t" style="left:494px;top:461.95px;font-size:14px;color:#c4c4c8;">File type</div>
<svg style="left:97.5px;top:489.30px" width="15" height="14"><path d="M0.5,2 Q0.5,0.5 2,0.5 H5.5 L7,2.2 H13 Q14.3,2.2 14.3,3.5 V12 Q14.3,13.3 13,13.3 H2 Q0.5,13.3 0.5,12 Z" fill="#4a92ff"/></svg>
<div class="t" style="left:115.7px;top:488.95px;font-size:14px;color:#ececee;font-weight:700;letter-spacing:-0.6px;">public</div>
<div class="t" style="left:386.5px;top:488.95px;font-size:14px;color:#ececee;font-weight:700;letter-spacing:-0.55px;">1.08kb</div>
<div class="t" style="left:494.3px;top:488.95px;font-size:14px;color:#ececee;font-weight:700;letter-spacing:-0.5px;">Folder</div>
<svg style="left:97.5px;top:516.25px" width="15" height="14"><path d="M0.5,2 Q0.5,0.5 2,0.5 H5.5 L7,2.2 H13 Q14.3,2.2 14.3,3.5 V12 Q14.3,13.3 13,13.3 H2 Q0.5,13.3 0.5,12 Z" fill="#4a92ff"/></svg>
<div class="t" style="left:115.7px;top:515.90px;font-size:14px;color:#ececee;font-weight:700;letter-spacing:-0.6px;">meetings</div>
<div class="t" style="left:386.5px;top:515.90px;font-size:14px;color:#ececee;font-weight:700;letter-spacing:-0.55px;">1.09kb</div>
<div class="t" style="left:494.3px;top:515.90px;font-size:14px;color:#ececee;font-weight:700;letter-spacing:-0.5px;">Folder</div>
<svg style="left:97.5px;top:543.20px" width="15" height="14"><path d="M0.5,2 Q0.5,0.5 2,0.5 H5.5 L7,2.2 H13 Q14.3,2.2 14.3,3.5 V12 Q14.3,13.3 13,13.3 H2 Q0.5,13.3 0.5,12 Z" fill="#4a92ff"/></svg>
<div class="t" style="left:115.7px;top:542.85px;font-size:14px;color:#ececee;font-weight:700;letter-spacing:-0.6px;">inventory</div>
<div class="t" style="left:386.5px;top:542.85px;font-size:14px;color:#ececee;font-weight:700;letter-spacing:-0.55px;">246.78kb</div>
<div class="t" style="left:494.3px;top:542.85px;font-size:14px;color:#ececee;font-weight:700;letter-spacing:-0.5px;">Folder</div>
<svg style="left:97.5px;top:570.15px" width="15" height="14"><path d="M0.5,2 Q0.5,0.5 2,0.5 H5.5 L7,2.2 H13 Q14.3,2.2 14.3,3.5 V12 Q14.3,13.3 13,13.3 H2 Q0.5,13.3 0.5,12 Z" fill="#4a92ff"/></svg>
<div class="t" style="left:115.7px;top:569.80px;font-size:14px;color:#ececee;font-weight:700;letter-spacing:-0.6px;">employees</div>
<div class="t" style="left:386.5px;top:569.80px;font-size:14px;color:#ececee;font-weight:700;letter-spacing:-0.55px;">2.13mb</div>
<div class="t" style="left:494.3px;top:569.80px;font-size:14px;color:#ececee;font-weight:700;letter-spacing:-0.5px;">Folder</div>
<svg style="left:97.5px;top:597.10px" width="15" height="14"><path d="M0.5,2 Q0.5,0.5 2,0.5 H5.5 L7,2.2 H13 Q14.3,2.2 14.3,3.5 V12 Q14.3,13.3 13,13.3 H2 Q0.5,13.3 0.5,12 Z" fill="#4a92ff"/></svg>
<div class="t" style="left:115.7px;top:596.75px;font-size:14px;color:#ececee;font-weight:700;letter-spacing:-0.6px;">rest</div>
<div class="t" style="left:386.5px;top:596.75px;font-size:14px;color:#ececee;font-weight:700;letter-spacing:-0.55px;">1.07kb</div>
<div class="t" style="left:494.3px;top:596.75px;font-size:14px;color:#ececee;font-weight:700;letter-spacing:-0.5px;">Folder</div>
<svg style="left:97.5px;top:624.05px" width="15" height="14"><path d="M3,0.5 H9 L12,3.5 V13.3 H3 Z" fill="#e8e8ea"/></svg>
<div class="t" style="left:115.7px;top:623.70px;font-size:14px;color:#ececee;font-weight:700;letter-spacing:-0.6px;">.access</div>
<div class="t" style="left:386.5px;top:623.70px;font-size:14px;color:#ececee;font-weight:700;letter-spacing:-0.55px;">53kb</div>
<div class="t" style="left:494.3px;top:623.70px;font-size:14px;color:#ececee;font-weight:700;letter-spacing:-0.5px;">File</div>
<div class="r" style="left:89px;top:722px;width:721px;height:22px;background:linear-gradient(#31323d,#2b2c36);border-radius:0 0 3px 3px"></div>
<div class="t" style="left:97.8px;top:728.84px;font-size:12px;color:#6c6e7a;letter-spacing:-0.35px;">FTP Client ver1.0.16 [RELEASE]</div>
<div class="r" style="left:0px;top:976px;width:1920px;height:40px;background:rgba(9,13,20,0.72);"></div>
<div class="r" style="left:48px;top:976px;width:1px;height:40px;background:rgba(40,55,80,0.6);"></div>
<svg style="left:9.5px;top:981px" width="28" height="28"><circle cx="14" cy="14.2" r="13.8" fill="url(#gKali)"/><path d="M1.8,9.6 C6,8.6 10,8 14.3,8.6 L14.5,10.6 C10,10 6,10.2 1.8,9.6 Z" fill="#f4f4f4"/><path d="M3.6,6.8 C7,6.4 10,6.6 12,7.6" stroke="#f0f0f0" stroke-width="0.9" fill="none"/><path d="M3.4,13.2 C4.8,11.6 6.5,10.8 8.4,10.6" stroke="#f0f0f0" stroke-width="1.1" fill="none"/><path d="M14.4,11.8 C13,14 14.2,17.4 16.6,17.8 C19.4,18.2 22.6,18.4 24.4,21 C25,22.2 24.8,23.4 24.4,24.4" stroke="#f4f4f4" stroke-width="1.3" fill="none"/><path d="M14.4,11.8 C16.2,10.2 20,10.2 22,12.4 C22.6,13.2 22.8,13.8 22.8,14.4" stroke="#f4f4f4" stroke-width="1.2" fill="none"/></svg>
<div class="r" style="left:57px;top:1013px;width:192px;height:3px;background:#335a8e;"></div>
<svg style="left:69.5px;top:983px" width="23.5" height="23.5"><use href="#sGlobe"/></svg>
<div class="t" style="left:100.8px;top:987.15px;font-size:14px;color:#ffffff;font-weight:700;letter-spacing:-0.62px;">Secure Browser</div>
<div class="r" style="left:257px;top:1013px;width:192px;height:3px;background:#335a8e;"></div>
<svg style="left:270px;top:983.7px" width="22" height="20"><use href="#sNote"/></svg>
<div class="t" style="left:301px;top:987.15px;font-size:14px;color:#ffffff;font-weight:700;letter-spacing:-0.45px;">Notepad</div>
<div class="r" style="left:457px;top:1013px;width:192px;height:3px;background:#335a8e;"></div>
<svg style="left:469.5px;top:985px" width="23.5" height="18"><use href="#sFolder"/></svg>
<div class="t" style="left:500.5px;top:987.15px;font-size:14px;color:#ffffff;font-weight:700;letter-spacing:-0.45px;">FTP Client</div>
<svg style="left:1876px;top:988px" width="26" height="18"><path d="M1,6.5 Q12.5,-3.5 24.5,6.5 L12.8,17.2 Z" fill="#d8d8d8"/></svg>
</body></html>
